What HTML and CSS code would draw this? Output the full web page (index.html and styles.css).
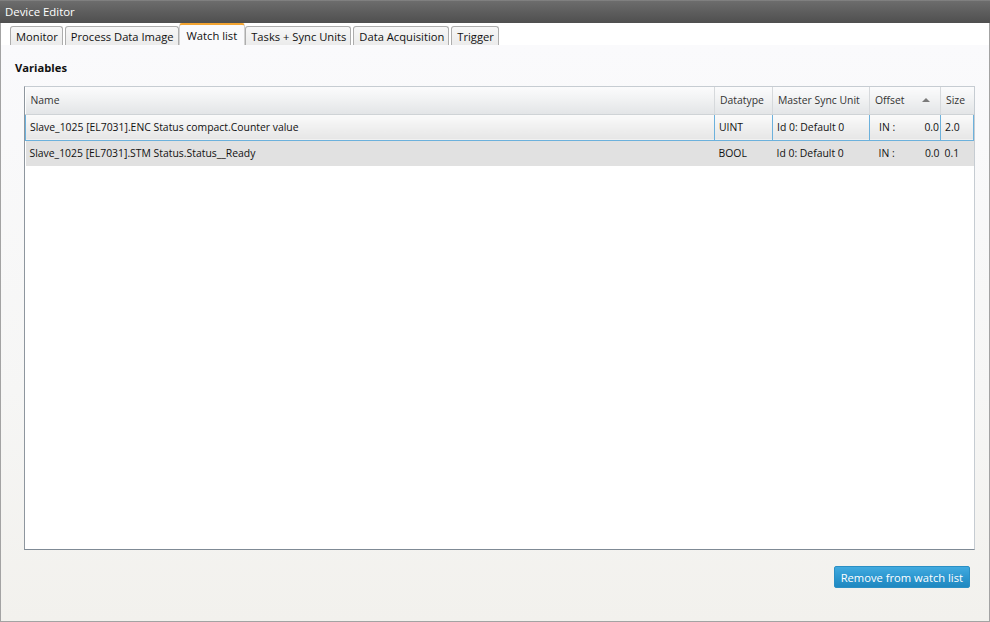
FILE: index.html
```html
<!DOCTYPE html>
<html lang="en">
<head>
	<meta charset="utf-8" />
	<title>Device Editor</title>
	<link rel="stylesheet" href="styles.css">
</head>
<body>
	<div class="editor">
		<div class="title-bar">Device Editor</div>

		<div class="tabs">
			<div class="tab">Monitor</div>
			<div class="tab">Process Data Image</div>
			<div class="tab active">Watch list</div>
			<div class="tab">Tasks + Sync Units</div>
			<div class="tab">Data Acquisition</div>
			<div class="tab">Trigger</div>
		</div>

		<div class="content">
			<div class="section-title">Variables</div>

			<div class="grid">
				<table>
					<colgroup>
						<col class="c-name" />
						<col class="c-type" />
						<col class="c-sync" />
						<col class="c-offset" />
						<col class="c-size" />
					</colgroup>
					<thead>
						<tr>
							<th>Name</th>
							<th>Datatype</th>
							<th>Master Sync Unit</th>
							<th class="sorted">Offset <span class="arrow"></span></th>
							<th>Size</th>
						</tr>
					</thead>
					<tbody>
						<tr class="selected">
							<td>Slave_1025 [EL7031].ENC Status compact.Counter value</td>
							<td>UINT</td>
							<td>Id 0: Default 0</td>
							<td><div class="offset"><span>IN :</span><span>0.0</span></div></td>
							<td>2.0</td>
						</tr>
						<tr class="alt">
							<td>Slave_1025 [EL7031].STM Status.Status__Ready</td>
							<td>BOOL</td>
							<td>Id 0: Default 0</td>
							<td><div class="offset"><span>IN :</span><span>0.0</span></div></td>
							<td>0.1</td>
						</tr>
					</tbody>
				</table>
			</div>

			<div class="actions">
				<div class="btn">Remove from watch list</div>
			</div>
		</div>
	</div>
</body>
</html>
```

FILE: styles.css
```css
/* global */
	html, body {height:100%;}
	body {
		margin: 0;
		font-family: "Open Sans", "Noto Sans", sans-serif;
		font-size: 10.4px;
		color: #111;
		background: #fff;
	}
	*, :after, :before {box-sizing: border-box;}
/* global end */

/* window */
	.editor {
		display: flex;
		flex-direction: column;
		width: 990px;
		height: 622px;
		border: 1px solid #a3a3a3;
		border-top: 0;
	}
	.title-bar {
		height: 23px;
		padding: 4px 0 0 5px;
		margin: 0 -1px;
		font-size: 11.4px;
		color: #fff;
		background: linear-gradient(#8a8a8a 0%, #6c6c6c 6%, #5e5e5e 50%, #4f4f4f 100%);
	}

	/* tabs */
	.tabs {
		display: flex;
		align-items: flex-end;
		gap: 2px;
		height: 22px;
		padding-left: 9px;
		background: #fff;
	}
	.tabs .tab {
		height: 19px;
		padding: 2px 4px 0 5px;
		border: 1px solid #adadad;
		border-bottom: 0;
		border-radius: 3px 3px 0 0;
		background: linear-gradient(#f7f7f7 0%, #ebebeb 100%);
		font-size: 11.2px;
		color: #111;
		white-space: nowrap;
	}
	.tabs .tab.active {
		height: 22px;
		padding: 3px 7px 0 7px;
		margin: 0 -2px 0 -2px;
		border-top: 2px solid #f3a431;
		border-color: #f3a431 #d2d2d2 transparent #d2d2d2;
		background: #fafafc;
	}

	/* content */
	.content {
		flex: 1;
		display: flex;
		flex-direction: column;
		padding: 15px 14px 33px 23px;
		background: linear-gradient(#fafafc 0%, #f6f6f5 60%, #f2f1ed 100%);
	}
	.section-title {
		margin: 0 0 8px -9px;
		font-size: 11.2px;
		font-weight: 700;
		height: 18px;
	}

	.grid {
		height: 464px;
		border: 1px solid #c6ccd2;
		border-left-color: #8e969e;
		border-bottom-color: #7f8a95;
		background: #fff;
	}
	.grid table {
		width: 100%;
		border-collapse: collapse;
		table-layout: fixed;
	}
	.grid .c-name {width: 689px;}
	.grid .c-type {width: 58px;}
	.grid .c-sync {width: 97px;}
	.grid .c-offset {width: 71px;}
	.grid th {
		height: 27px;
		padding: 0 5px;
		text-align: left;
		font-weight: normal;
		color: #333;
		white-space: nowrap;
		overflow: hidden;
		border-right: 1px solid #d6d9dc;
		border-bottom: 1px solid #cfd3d6;
		background: linear-gradient(#fbfbfc 0%, #f1f2f3 45%, #e3e5e7 100%);
	}
	.grid th:last-child {border-right: 0;}
	.grid th.sorted {position: relative;}
	.grid th .arrow {
		position: absolute;
		right: 10px;
		top: 11px;
		border: 4px solid transparent;
		border-top: 0;
		border-bottom: 4px solid #7a7a7a;
	}
	.grid td {
		height: 26px;
		padding: 0 4px;
		white-space: nowrap;
		overflow: hidden;
	}
	.grid tr.selected td {
		border: 1px solid #6cb1dc;
		background: linear-gradient(#fbfbfb 0%, #f0f0f0 50%, #e6e6e6 100%);
	}
	.grid tr.alt td {background: #e1e1e1;}
	.grid .offset {
		display: flex;
		justify-content: space-between;
		padding-left: 5px;
		margin-right: -3px;
	}

	.actions {
		display: flex;
		justify-content: flex-end;
		padding: 16px 5px 0 0;
	}
	.btn {
		height: 22px;
		padding: 3px 6px 0 6px;
		border: 1px solid #2a8fc4;
		border-radius: 2px;
		background: linear-gradient(#41aadf 0%, #2d98d0 50%, #1f88c0 100%);
		color: #fff;
		font-size: 11.2px;
		cursor: pointer;
	}
/* window end */
```
